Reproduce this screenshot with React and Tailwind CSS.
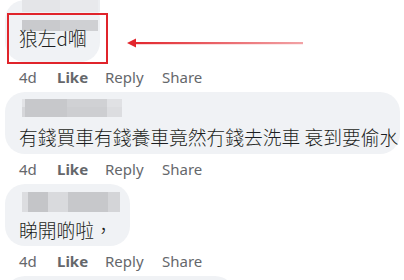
import React from "react";

const textFont = { fontFamily: '"Noto Sans CJK TC","Noto Sans",sans-serif' };

function Mosaic({ rows }) {
  return (
    <div className="flex flex-col">
      {rows.map((row, i) => (
        <div key={i} className="flex" style={{ height: row.h }}>
          {row.cells.map((c, j) => (
            <div key={j} style={{ width: c[0], background: c[1] }} />
          ))}
        </div>
      ))}
    </div>
  );
}

function Actions() {
  return (
    <div className="flex h-[30px] items-center pl-[14px] text-[15px] text-[#65676b] font-['Noto_Sans',sans-serif]">
      <span className="w-[38px]">4d</span>
      <span className="w-[48px] font-bold">Like</span>
      <span className="w-[57px]">Reply</span>
      <span>Share</span>
    </div>
  );
}

function Bubble({ width, mosaic, text, offset = 0 }) {
  return (
    <div
      className="rounded-[20px] bg-[#f0f2f5] pl-[14px] pt-[7px] pb-[5px] h-[62px] box-border"
      style={{ width }}
    >
      <div className="h-[20px] ml-[3px]">
        <div style={{ marginTop: offset }}>
          <Mosaic rows={mosaic} />
        </div>
      </div>
      <div
        className="mt-[5px] h-[25px] leading-[25px] text-[18.75px] font-light text-[#1c1e21] whitespace-nowrap"
        style={textFont}
      >
        {text}
      </div>
    </div>
  );
}

export default function App() {
  const m1 = [
    { h: 12, cells: [[38, "#e4e5e8"], [38, "#e8e9ec"], [2, "#eceef1"]] },
    { h: 8, cells: [] },
    { h: 11, cells: [[38, "#c9cacd"], [38, "#cfd0d3"]] },
  ];
  const m2 = [
    { h: 8, cells: [[3, "#e2e3e6"], [42, "#c7c8cb"], [40, "#d0d1d4"], [15, "#e0e1e4"]] },
    { h: 10, cells: [[3, "#d6d7da"], [42, "#c7c8cb"], [40, "#cdced1"], [15, "#dcdde0"]] },
  ];
  const m3 = [
    { h: 20, cells: [[6, "#dcdde0"], [20, "#c4c5c8"], [20, "#d9dadd"], [40, "#c7c8cb"], [12, "#d4d5d8"]] },
  ];
  return (
    <div className="relative h-[280px] w-[404px] overflow-hidden bg-white">
      <div className="flex flex-col pl-[5px]">
        <Bubble width={95} mosaic={m1} text="狼左d嗰" offset={-7} />
        <Actions />
        <Bubble width={395} mosaic={m2} text="有錢買車有錢養車竟然冇錢去洗車 衰到要偷水" />
        <Actions />
        <Bubble width={125} mosaic={m3} text="睇開啲啦，" offset={1} />
        <Actions />
        <div className="h-[40px] w-[230px] rounded-[20px] bg-[#f0f2f5]" />
      </div>
      <div className="absolute left-[7px] top-[13px] h-[51px] w-[101px] border-2 border-[#e0242b]" />
      <svg className="absolute left-[125px] top-[36px]" width="182" height="14" viewBox="0 0 182 14">
        <defs>
          <linearGradient id="g" x1="0" x2="1" y1="0" y2="0">
            <stop offset="0" stopColor="#e2262d" />
            <stop offset="1" stopColor="#f2a3a6" />
          </linearGradient>
        </defs>
        <rect x="9" y="6" width="169" height="2.2" fill="url(#g)" />
        <polygon points="2,7 11,2.5 11,11.5" fill="#e2262d" />
      </svg>
    </div>
  );
}
